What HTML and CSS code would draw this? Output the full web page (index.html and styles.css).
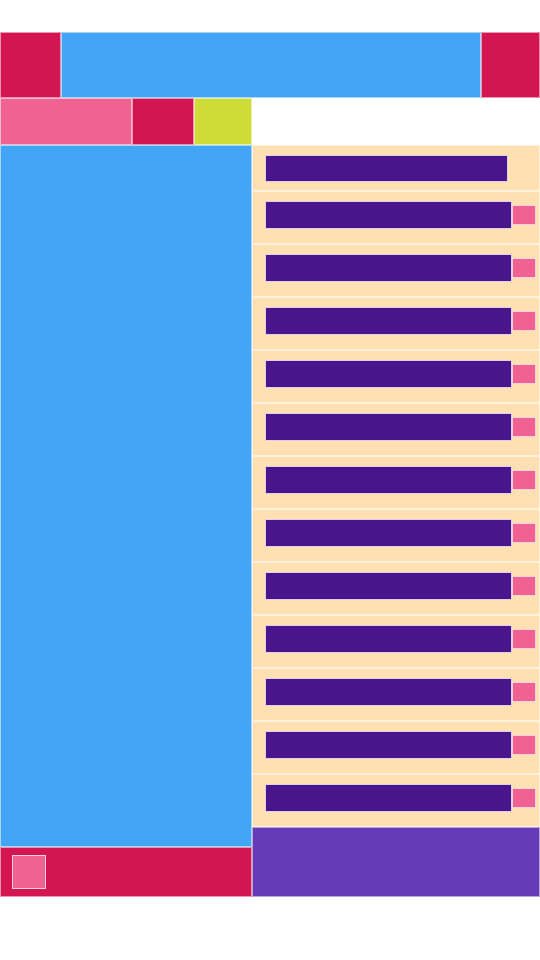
FILE: index.html
```html
<!DOCTYPE html>
<html lang="en">
<head>
    <meta charset="UTF-8">
    <meta name="viewport" content="width=device-width, initial-scale=1.0">
    <title>Layout</title>
    <link rel="stylesheet" href="styles.css">
</head>
<body>

    <div class="app">
        <div class="topbar">
            <div class="box red top-left"></div>
            <div class="box blue top-mid"></div>
            <div class="box red top-right"></div>
        </div>

        <div class="tabs">
            <div class="box pink tab-a"></div>
            <div class="box red tab-b"></div>
            <div class="box lime tab-c"></div>
        </div>

        <div class="main">
            <div class="side">
                <div class="box blue side-body"></div>
                <div class="box red side-foot">
                    <div class="box pink side-btn"></div>
                </div>
            </div>

            <div class="list">
                <div class="box peach row row-head">
                    <div class="box violet bar bar-head"></div>
                </div>
                <div class="box peach row"><div class="box violet bar"></div><div class="box pink tag"></div></div>
                <div class="box peach row"><div class="box violet bar"></div><div class="box pink tag"></div></div>
                <div class="box peach row"><div class="box violet bar"></div><div class="box pink tag"></div></div>
                <div class="box peach row"><div class="box violet bar"></div><div class="box pink tag"></div></div>
                <div class="box peach row"><div class="box violet bar"></div><div class="box pink tag"></div></div>
                <div class="box peach row"><div class="box violet bar"></div><div class="box pink tag"></div></div>
                <div class="box peach row"><div class="box violet bar"></div><div class="box pink tag"></div></div>
                <div class="box peach row"><div class="box violet bar"></div><div class="box pink tag"></div></div>
                <div class="box peach row"><div class="box violet bar"></div><div class="box pink tag"></div></div>
                <div class="box peach row"><div class="box violet bar"></div><div class="box pink tag"></div></div>
                <div class="box peach row"><div class="box violet bar"></div><div class="box pink tag"></div></div>
                <div class="box peach row"><div class="box violet bar"></div><div class="box pink tag"></div></div>
                <div class="box purple list-foot"></div>
            </div>
        </div>
    </div>

</body>
</html>
```

FILE: styles.css
```css
* {
    box-sizing: border-box;
}
body {
    margin: 0;
    background-color: #ffffff;
    font-family: "Liberation Sans", Arial, sans-serif;
}
.app {
    width: 540px;
    padding-top: 32px;
}
.box {
    border: 1px solid rgba(255,255,255,0.55);
}
.red { background-color: #d31651; }
.blue { background-color: #42a5f5; }
.pink { background-color: #f06292; }
.lime { background-color: #cddc39; }
.peach { background-color: #ffe0b2; }
.violet { background-color: #4a148c; }
.purple { background-color: #673ab7; }

.topbar {
    display: flex;
    height: 66px;
}
.top-left { width: 61px; }
.top-mid { width: 420px; }
.top-right { flex: 1; }

.tabs {
    display: flex;
    height: 47px;
}
.tab-a { width: 132px; }
.tab-b { width: 62px; }
.tab-c { width: 58px; }

.main {
    display: flex;
    height: 752px;
}
.side {
    width: 252px;
    display: flex;
    flex-direction: column;
}
.side-body {
    flex: 1;
}
.side-foot {
    height: 50px;
    padding: 7px 0 0 11px;
}
.side-btn {
    width: 34px;
    height: 34px;
    border-color: rgba(255,255,255,0.7);
}

.list {
    flex: 1;
    display: flex;
    flex-direction: column;
}
.row {
    height: 53px;
    display: flex;
    align-items: flex-start;
    padding: 9px 0 0 12px;
}
.row-head {
    height: 46px;
}
.bar {
    width: 247px;
    height: 28px;
    border-color: rgba(255,255,255,0.8);
}
.bar-head {
    width: 243px;
    height: 27px;
}
.tag {
    width: 24px;
    height: 20px;
    margin-top: 4px;
    border-color: rgba(255,255,255,0.7);
}
.list-foot {
    flex: 1;
}
```
